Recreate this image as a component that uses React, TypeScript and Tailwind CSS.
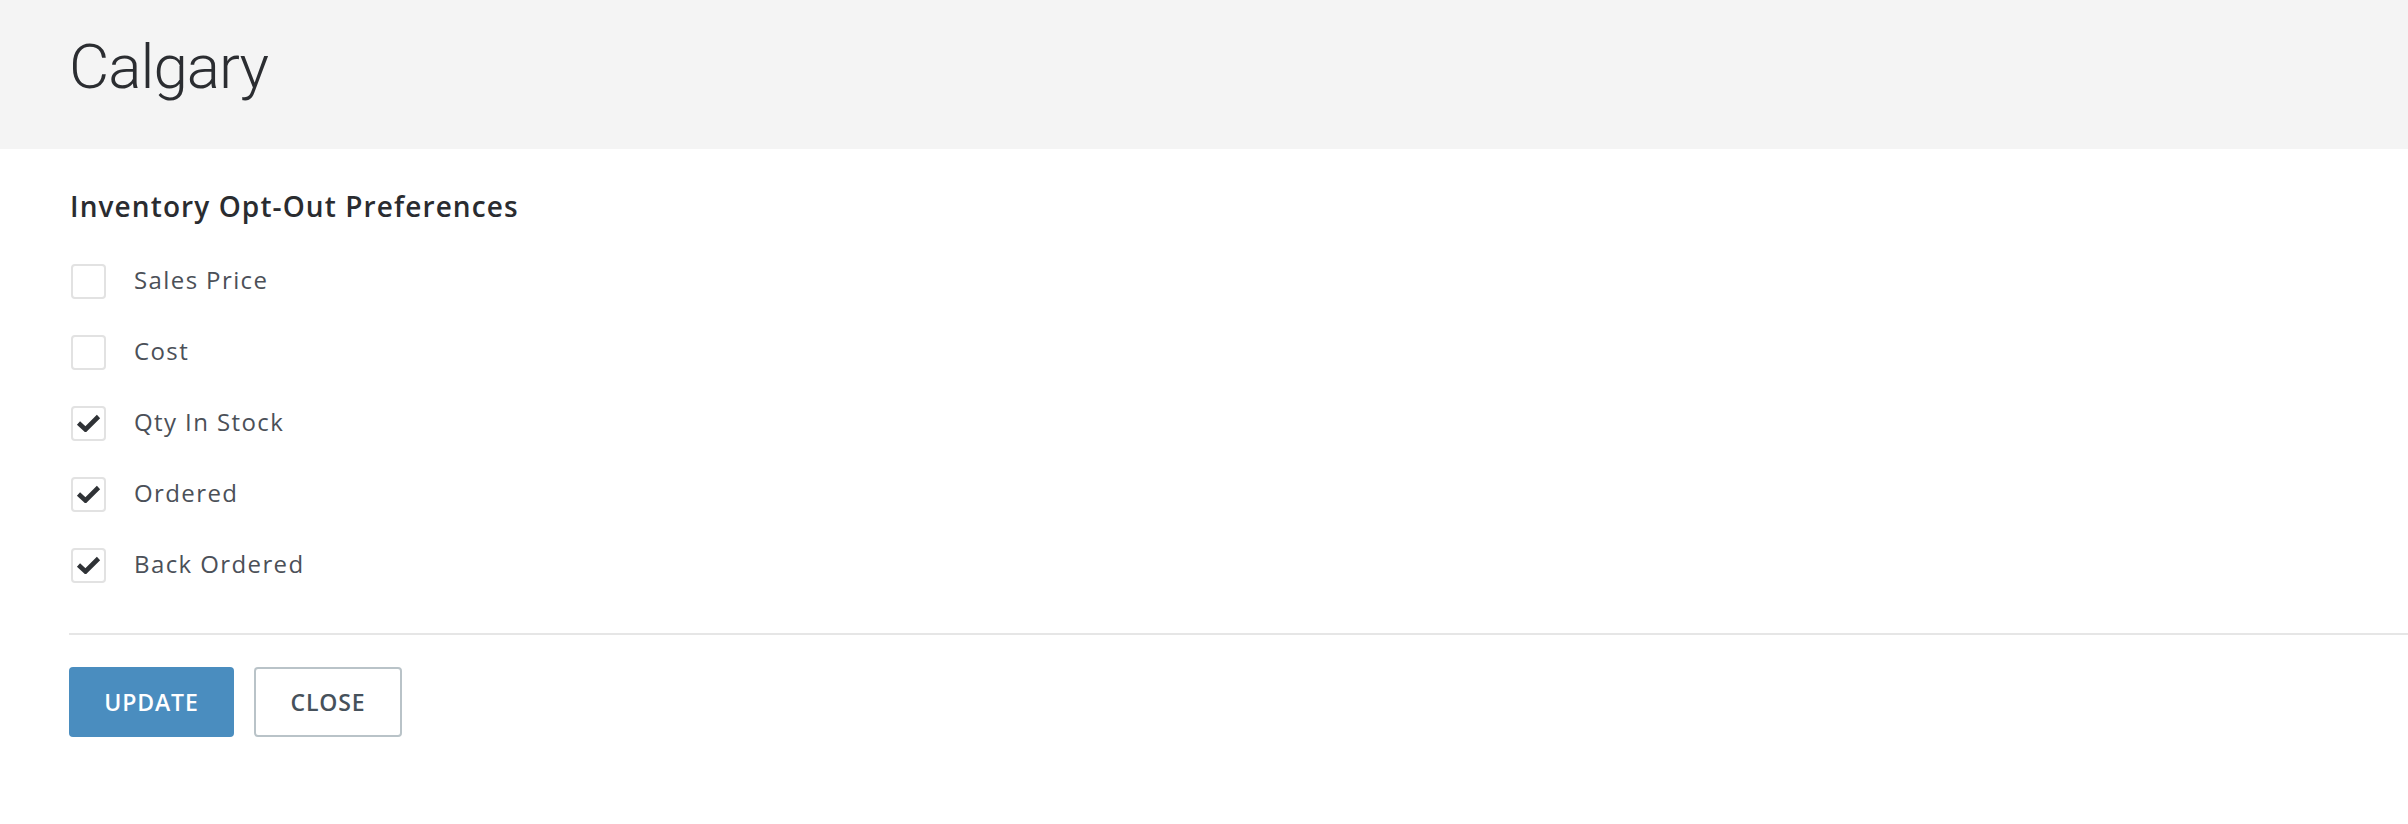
import React from "react";

const options = [
  { label: "Sales Price", checked: false },
  { label: "Cost", checked: false },
  { label: "Qty In Stock", checked: true },
  { label: "Ordered", checked: true },
  { label: "Back Ordered", checked: true },
];

const CheckRow = ({ label, checked }: { label: string; checked: boolean }) => {
  return (
    <label className="flex items-center h-[35px]">
      <span className="flex items-center justify-center w-[35px] h-[35px] border-2 border-[#e2e2e2] rounded-[4px] bg-white">
        {checked && (
          <svg width="25" height="18" viewBox="0 0 25 18" className="-mt-[2px]">
            <path
              d="M2.5 9 L9.5 15.5 L22.5 2.5"
              fill="none"
              stroke="#2f3236"
              strokeWidth="4.6"
              strokeLinejoin="miter"
            />
          </svg>
        )}
      </span>
      <span className="ml-[28px] mb-[4px] text-[24px] leading-none tracking-[1.4px] text-[#4b5058]">
        {label}
      </span>
    </label>
  );
};

const App = () => {
  return (
    <div className="min-h-screen bg-white font-['Open_Sans',sans-serif]">
      <header className="h-[149px] bg-[#f4f4f4] pl-[69px] pt-[36px]">
        <h1 className="text-[62px] leading-none font-light tracking-[-1px] text-[#2b2d31] font-['Roboto',sans-serif]">
          Calgary
        </h1>
      </header>
      <main className="pl-[70px]">
        <h2 className="mt-[43px] text-[28px] leading-none font-semibold text-[#2a2c30] tracking-[1.1px]">
          Inventory Opt-Out Preferences
        </h2>
        <div className="mt-[44px] ml-[1px] flex flex-col gap-[36px]">
          {options.map((o) => (
            <CheckRow key={o.label} label={o.label} checked={o.checked} />
          ))}
        </div>
        <div className="mt-[50px] -ml-[1px] border-t-2 border-[#e6e6e6]" />
        <div className="mt-[32px] -ml-[1px] flex gap-[20px]">
          <button className="w-[165px] h-[70px] rounded-[4px] bg-[#4a8dbf] text-white text-[23px] font-semibold tracking-[0.9px]">
            UPDATE
          </button>
          <button className="w-[148px] h-[70px] rounded-[4px] border-2 border-[#b9c3c8] bg-white text-[#46515b] text-[23px] font-semibold tracking-[0.9px]">
            CLOSE
          </button>
        </div>
      </main>
    </div>
  );
};

export default App;
